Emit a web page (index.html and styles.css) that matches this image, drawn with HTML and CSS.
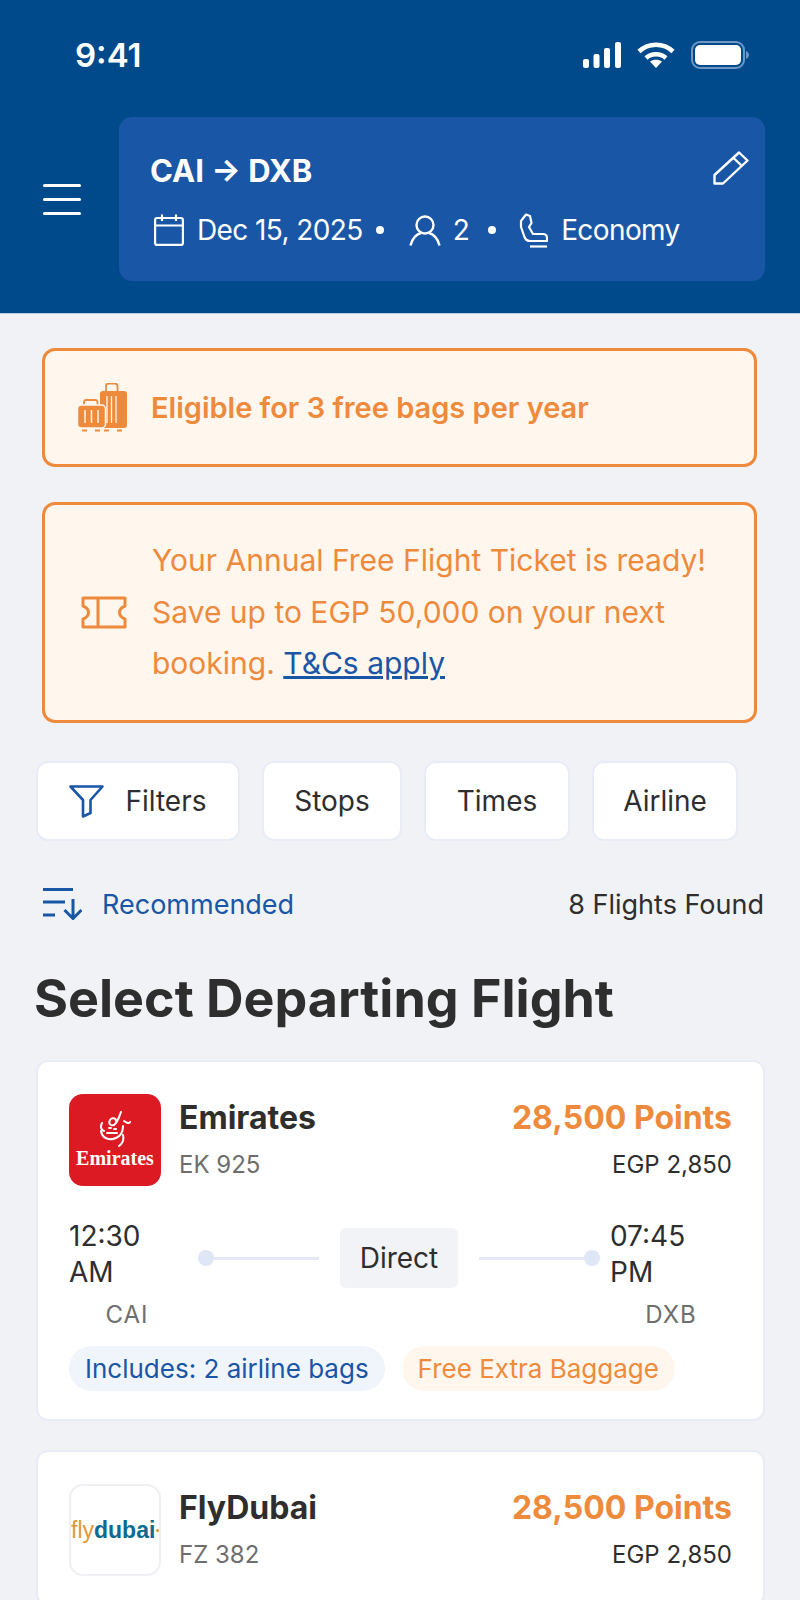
FILE: index.html
```html
<!DOCTYPE html>
<html lang="en">
<head>
    <meta charset="UTF-8">
    <meta name="viewport" content="width=device-width, initial-scale=1.0">
    <title>Select Departing Flight</title>
    <link rel="stylesheet" href="styles.css">
</head>
<body>
    <div class="screen">
        <header class="top">
            <div class="status">
                <span class="clock">9:41</span>
                <div class="status-icons">
                    <svg width="38" height="26" viewBox="0 0 38 26" fill="#fff">
                        <rect x="0" y="17" width="6" height="9" rx="2"/>
                        <rect x="10.5" y="12" width="6" height="14" rx="2"/>
                        <rect x="21" y="6" width="6" height="20" rx="2"/>
                        <rect x="32" y="0" width="6" height="26" rx="2"/>
                    </svg>
                    <svg width="38" height="26" viewBox="0 0 38 26" fill="none" stroke="#fff" stroke-width="4.5">
                        <path d="M2 9.5C11.500 0.500 26.500 0.500 36 9.500"/>
                        <path d="M9 16C14.500 11 23.500 11 29 16"/>
                        <path d="M19 26l-6-6.500C16.500 17 21.500 17 25 19.500z" fill="#fff" stroke="none"/>
                    </svg>
                    <svg width="58" height="28" viewBox="0 0 58 28">
                        <rect x="1" y="1" width="52" height="26" rx="8" fill="none" stroke="#6f97c6" stroke-width="2"/>
                        <rect x="4" y="4" width="46" height="20" rx="5" fill="#fff"/>
                        <path d="M55 10c2 1 3 2.500 3 4s-1 3-3 4z" fill="#6f97c6"/>
                    </svg>
                </div>
            </div>
            <div class="nav">
                <div class="menu"><span></span><span></span><span></span></div>
                <div class="trip">
                    <div class="trip-route">
                        <span>CAI → DXB</span>
                        <svg class="edit" width="36" height="34" viewBox="0 0 36 34" fill="none" stroke="#fff" stroke-width="2.400" stroke-linejoin="round">
                            <path d="M26 1.500L34.500 9.500 10 32.500H1.500V24z"/>
                            <path d="M20.500 7L29 15"/>
                        </svg>
                    </div>
                    <div class="trip-meta">
                        <svg width="30" height="32" viewBox="0 0 30 32" fill="none" stroke="#fff" stroke-width="2.200">
                            <rect x="1.100" y="4" width="27.800" height="26.900" rx="2"/>
                            <path d="M1 11.500H29M8 0.500V7M22 0.500V7"/>
                        </svg>
                        <span class="date">Dec 15, 2025</span>
                        <span class="dot"></span>
                        <svg class="person" width="32" height="31" viewBox="0 0 32 31" fill="none" stroke="#fff" stroke-width="2.400">
                            <circle cx="16" cy="10" r="8.500"/>
                            <path d="M1.500 30.500C3 23 8 19 12 18M30.500 30.500C29 23 24 19 20 18"/>
                        </svg>
                        <span class="pax">2</span>
                        <span class="dot"></span>
                        <svg class="seat" width="29" height="35" viewBox="0 0 29 35" fill="none" stroke="#fff" stroke-width="2.200" stroke-linejoin="round">
                            <path d="M2 8L7 1.500 11 3 12.500 10 10 14 14 21H24C27 21 28 23 28 25V28H11C8 28 6.500 26.500 5.500 24L2 14z"/>
                            <path d="M11 33.500H28"/>
                        </svg>
                        <span class="cabin">Economy</span>
                    </div>
                </div>
            </div>
        </header>

        <main class="content">
            <div class="notice notice-bags">
                <svg class="bags" width="50" height="50" viewBox="0 0 50 50" fill="#ee8a3c">
                    <path d="M29 8V3C29 1.500 30 .5 31.500 .5H38C39.500 .5 40.500 1.500 40.500 3V8" fill="none" stroke="#ee8a3c" stroke-width="1.800"/>
                    <rect x="23" y="8" width="27" height="37" rx="3"/>
                    <path d="M30 13V40M34.500 13V40M39 13V40" stroke="#fff6ee" stroke-width="1.300"/>
                    <path d="M7 22V19C7 17.500 8 17 9.500 17H18C19.500 17 20.500 17.500 20.500 19V22" fill="none" stroke="#ee8a3c" stroke-width="1.800"/>
                    <rect x="0.500" y="22" width="28" height="23" rx="4" stroke="#fff6ee" stroke-width="1.500"/>
                    <path d="M8 27V40M14.500 27V40M21 27V40" stroke="#fff6ee" stroke-width="1.500"/>
                    <path d="M5 47.500H10M18 47.500H23M27 47.500H32M40 47.500H45" stroke="#ee8a3c" stroke-width="1.800"/>
                </svg>
                <strong>Eligible for 3 free bags per year</strong>
            </div>
            <div class="notice notice-ticket">
                <svg class="ticket" width="46" height="33" viewBox="0 0 46 33" fill="none" stroke="#ee8a3c" stroke-width="3" stroke-linejoin="round">
                    <path d="M2 2H44V10C40 11.500 38.500 14 38.500 16.500S40 21.500 44 23V31H2V23C6 21.500 7.500 19 7.500 16.500S6 11.500 2 10z"/>
                    <path d="M17 2V31"/>
                </svg>
                <p>Your Annual Free Flight Ticket is ready! Save up to EGP 50,000 on your next booking. <a href="#">T&amp;Cs apply</a></p>
            </div>

            <div class="chips">
                <div class="chip chip-filters">
                    <svg width="35" height="33" viewBox="0 0 35 33" fill="none" stroke="#1a56a6" stroke-width="2.600" stroke-linejoin="round">
                        <path d="M1.500 1.500H33.500L21.500 15V28L14 31.500V15z"/>
                    </svg>
                    Filters
                </div>
                <div class="chip chip-stops">Stops</div>
                <div class="chip chip-times">Times</div>
                <div class="chip chip-airline">Airline</div>
            </div>

            <div class="sort">
                <div class="sort-by">
                    <svg width="39" height="32" viewBox="0 0 39 32" fill="none" stroke="#1a56a6" stroke-width="3">
                        <path d="M0 1.500H30M0 14H22M0 27H12"/>
                        <path d="M30 11V30M21.500 22L30 30.500 38.500 22"/>
                    </svg>
                    Recommended
                </div>
                <span class="found">8 Flights Found</span>
            </div>

            <h1>Select Departing Flight</h1>

            <div class="flight">
                <div class="flight-head">
                    <div class="logo logo-emirates">
                        <svg width="32" height="36" viewBox="0 0 32 36" fill="none" stroke="#fff" stroke-width="2" stroke-linecap="round">
                            <path d="M22 1C20 6 19 11 15 14 12 15 9 13 11 9 13 6 17 7 17 10"/>
                            <path d="M3 12C1 16 2 19 5 20M25 10C28 12 30 13 31 11"/>
                            <path d="M2 20C3 27 10 30 17 27 22 25 24 20 24 15"/>
                            <path d="M8 22H18M24 24C25 28 24 32 20 35M10 17H12M15 18H17"/>
                        </svg>
                        <span>Emirates</span>
                    </div>
                    <div class="airline">
                        <h2>Emirates</h2>
                        <span>EK 925</span>
                    </div>
                    <div class="price">
                        <strong>28,500 Points</strong>
                        <span>EGP 2,850</span>
                    </div>
                </div>
                <div class="route">
                    <div class="stop stop-from">
                        <span class="time">12:30 AM</span>
                        <span class="code">CAI</span>
                    </div>
                    <div class="path">
                        <span class="path-dot"></span>
                        <span class="path-line"></span>
                        <span class="direct">Direct</span>
                        <span class="path-line"></span>
                        <span class="path-dot"></span>
                    </div>
                    <div class="stop stop-to">
                        <span class="time">07:45 PM</span>
                        <span class="code">DXB</span>
                    </div>
                </div>
                <div class="tags">
                    <span class="tag tag-blue">Includes: 2 airline bags</span>
                    <span class="tag tag-orange">Free Extra Baggage</span>
                </div>
            </div>

            <div class="flight">
                <div class="flight-head">
                    <div class="logo logo-flydubai"><span class="fly">fly</span><span class="dubai">dubai</span><span class="fly-dot"></span></div>
                    <div class="airline">
                        <h2>FlyDubai</h2>
                        <span>FZ 382</span>
                    </div>
                    <div class="price">
                        <strong>28,500 Points</strong>
                        <span>EGP 2,850</span>
                    </div>
                </div>
            </div>
        </main>
    </div>
</body>
</html>
```

FILE: styles.css
```css
* {
    box-sizing: border-box;
}
html, body {
    margin: 0;
    padding: 0;
}
body {
    font-family: Inter, "Noto Sans", sans-serif;
    background-color: #f0f2f5;
    color: #2e2e2e;
}
.screen {
    width: 800px;
    height: 1600px;
    overflow: hidden;
}

/* header */
.top {
    height: 314px;
    background-color: #004a8b;
    border-bottom: 1px solid #b9cbe0;
    color: #fff;
}
.status {
    display: flex;
    justify-content: space-between;
    align-items: center;
    height: 28px;
    margin-top: 0;
    padding: 0 51px 0 75px;
    transform: translateY(41px);
}
.clock {
    font-size: 33px;
    font-weight: 600;
}
.status-icons {
    display: flex;
    align-items: center;
    gap: 16px;
}
.nav {
    display: flex;
    align-items: center;
    padding: 89px 35px 0 43px;
}
.menu {
    display: flex;
    flex-direction: column;
    gap: 11px;
    width: 38px;
    margin-right: 38px;
}
.menu span {
    height: 3px;
    background-color: #fff;
    border-radius: 2px;
}
.trip {
    flex: 1;
    height: 164px;
    padding: 35px 16px 0 31px;
    background-color: #1a56a6;
    border-radius: 13px;
}
.trip-route {
    display: flex;
    justify-content: space-between;
    align-items: flex-start;
    font-size: 31px;
    font-weight: 700;
    line-height: 38px;
}
.edit {
    margin-top: -1px;
}
.trip-meta {
    display: flex;
    align-items: center;
    height: 36px;
    margin-top: 22px;
    padding-left: 4px;
    font-size: 28px;
    letter-spacing: -0.6px;
}
.date {
    margin-left: 13px;
}
.dot {
    width: 8px;
    height: 8px;
    margin: 0 13px;
    background-color: #fff;
    border-radius: 50%;
}
.person {
    margin-left: 12px;
}
.pax {
    margin: 0 6px 0 12px;
}
.seat {
    margin-left: 10px;
}
.cabin {
    margin-left: 13px;
}

/* notices */
.content {
    padding: 34px 36px 0 36px;
}
.notice {
    display: flex;
    align-items: center;
    margin: 0 -0px 0 6px;
    width: 715px;
    color: #ee8a3c;
    background-color: #fff6ee;
    border: 3px solid #ee8a3c;
    border-radius: 13px;
}
.notice-bags {
    height: 119px;
    padding-left: 32px;
}
.bags {
    margin-right: 24px;
}
.notice-bags strong {
    font-size: 29px;
    font-weight: 600;
}
.notice-ticket {
    height: 221px;
    margin-top: 35px;
    padding-left: 36px;
}
.ticket {
    flex-shrink: 0;
    margin-right: 25px;
}
.notice-ticket p {
    margin: 0;
    font-size: 30px;
    line-height: 51.500px;
}
.notice-ticket a {
    color: #1a56a6;
}

/* filter chips */
.chips {
    display: flex;
    gap: 22px;
    margin-top: 38px;
}
.chip {
    display: flex;
    align-items: center;
    justify-content: center;
    height: 80px;
    font-size: 28px;
    background-color: #fff;
    border: 2px solid #e8ecf6;
    border-radius: 12px;
}
.chip-filters {
    gap: 21px;
    width: 204px;
}
.chip-stops {
    width: 140px;
}
.chip-times {
    width: 146px;
}
.chip-airline {
    width: 146px;
}

/* sort row */
.sort {
    display: flex;
    justify-content: space-between;
    align-items: center;
    height: 40px;
    margin-top: 43px;
    font-size: 27px;
}
.sort-by {
    display: flex;
    align-items: center;
    gap: 20px;
    padding-left: 7px;
    color: #1a56a6;
}
h1 {
    margin: 43px 0 0 -2px;
    font-size: 52px;
    line-height: 64px;
    font-weight: 700;
}

/* flight cards */
.flight {
    width: 729px;
    margin-top: 29px;
    padding: 32px 31px 28px 31px;
    background-color: #fff;
    border: 2px solid #e8ecf6;
    border-radius: 12px;
}
.flight-head {
    display: flex;
    align-items: flex-start;
}
.logo {
    flex-shrink: 0;
    width: 92px;
    height: 92px;
    border-radius: 14px;
}
.logo-emirates {
    display: flex;
    flex-direction: column;
    align-items: center;
    justify-content: center;
    background-color: #dc1a24;
    color: #fff;
    font-family: "Liberation Serif", serif;
    font-size: 20px;
    font-weight: 700;
    line-height: 22px;
}
.logo-flydubai {
    display: flex;
    align-items: center;
    justify-content: center;
    border: 2px solid #eef0f4;
    font-family: "Liberation Sans", sans-serif;
    font-size: 23px;
}
.fly {
    color: #e2992f;
}
.dubai {
    color: #0f6a91;
    font-weight: 700;
}
.fly-dot {
    width: 3px;
    height: 3px;
    margin-left: 1px;
    background-color: #e2992f;
    border-radius: 50%;
}
.airline {
    flex: 1;
    margin-left: 18px;
}
.airline h2 {
    margin: 0;
    font-size: 32px;
    line-height: 48px;
    font-weight: 700;
}
.airline span {
    display: block;
    margin-top: 8px;
    color: #6e6e6e;
    font-size: 24px;
}
.price {
    text-align: right;
}
.price strong {
    display: block;
    color: #ee8a3c;
    font-size: 32px;
    line-height: 48px;
    font-weight: 700;
}
.price span {
    display: block;
    margin-top: 8px;
    font-size: 24px;
}
.route {
    display: flex;
    align-items: flex-start;
    margin-top: 32px;
}
.stop {
    display: flex;
    flex-direction: column;
    align-items: center;
    width: 116px;
}
.stop-to {
    width: 122px;
}
.time {
    font-size: 28px;
    line-height: 36px;
}
.code {
    margin-top: 10px;
    color: #6e6e6e;
    font-size: 24px;
    letter-spacing: 1px;
}
.path {
    flex: 1;
    display: flex;
    align-items: center;
    margin-top: 10px;
    padding: 0 10px 0 13px;
}
.path-dot {
    flex-shrink: 0;
    width: 16px;
    height: 16px;
    background-color: #dfe6f5;
    border-radius: 50%;
}
.path-line {
    flex: 1;
    height: 3px;
    background-color: #e4e9f3;
}
.direct {
    margin: 0 21px;
    padding: 0 20px;
    font-size: 28px;
    line-height: 60px;
    background-color: #f1f3f6;
    border-radius: 6px;
}
.tags {
    display: flex;
    gap: 17px;
    margin-top: 17px;
}
.tag {
    padding: 0 16px;
    font-size: 26px;
    line-height: 45px;
    border-radius: 23px;
}
.tag-blue {
    color: #1a56a6;
    background-color: #f0f5fb;
}
.tag-orange {
    color: #ee8a3c;
    background-color: #fff6ee;
}
```
